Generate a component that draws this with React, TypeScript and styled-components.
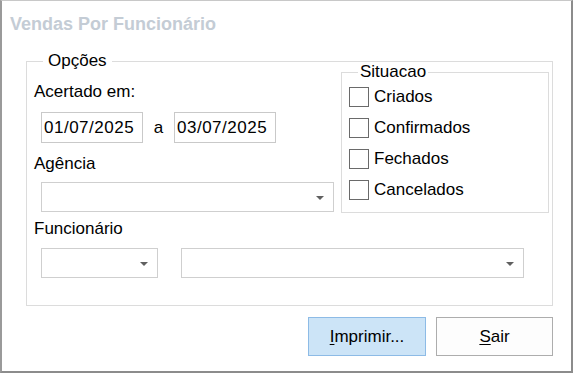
import React from 'react'
import styled, { createGlobalStyle } from 'styled-components'

const GlobalStyle = createGlobalStyle`
  html, body {
    margin: 0;
    padding: 0;
    background: #ffffff;
  }
  body {
    font-family: "Liberation Sans", Arial, sans-serif;
    color: #000;
  }
`

const Window = styled.div`
  width: 573px;
  height: 373px;
  box-sizing: border-box;
  background: #fff;
  border-top: 1px solid #c8c8c8;
  border-left: 2px solid #9a9a9a;
  border-right: 2px solid #8c8c8c;
  border-bottom: 2px solid #8c8c8c;
  padding: 11px 18px 0 24px;
  font-size: 17px;
`

const Title = styled.div`
  font-weight: bold;
  font-size: 18px;
  line-height: 24px;
  color: #c4ccd5;
  margin-left: -16px;
`

const Group = styled.fieldset<{ $w?: number; $h: number }>`
  margin: 0;
  box-sizing: border-box;
  border: 1px solid #dcdcdc;
  min-width: 0;
  width: ${p => (p.$w ? `${p.$w}px` : 'auto')};
  height: ${p => p.$h}px;
  padding: 0 3px 0 7px;
`

const OptionsGroup = styled(Group)`
  margin-top: 14px;
`

const SituacaoGroup = styled(Group)`
  flex: none;
  margin-top: -11px;
  padding: 0 6px 0 7px;
`

const Legend = styled.legend<{ $pad: number }>`
  margin-left: 9px;
  padding: 0 ${p => p.$pad}px;
  line-height: 22px;
`

const TopRow = styled.div`
  display: flex;
  align-items: flex-start;
  gap: 8px;
`

const LeftCol = styled.div`
  width: 299px;
  display: flex;
  flex-direction: column;
`

const Label = styled.div<{ $mt: number }>`
  line-height: 22px;
  margin-top: ${p => p.$mt}px;
`

const DateRow = styled.div`
  display: flex;
  align-items: center;
  margin: 9px 0 0 7px;
`

const DateBox = styled.div`
  width: 102px;
  height: 31px;
  box-sizing: border-box;
  border: 1px solid #c9c9c9;
  padding: 0 2px;
  line-height: 29px;
  letter-spacing: 0.5px;
  white-space: nowrap;
  overflow: hidden;
`

const Sep = styled.span`
  width: 31px;
  text-align: center;
`

const Combo = styled.div<{ $w: number }>`
  width: ${p => p.$w}px;
  height: 30px;
  box-sizing: border-box;
  border: 1px solid #cfcfcf;
  display: flex;
  align-items: center;
  justify-content: flex-end;
  padding-right: 9px;
`

const Arrow = styled.span`
  width: 0;
  height: 0;
  border-left: 4px solid transparent;
  border-right: 4px solid transparent;
  border-top: 4px solid #606060;
  margin-top: 1px;
`

const AgenciaCombo = styled(Combo)`
  margin: 7px 0 0 7px;
`

const ComboRow = styled.div`
  display: flex;
  gap: 23px;
  margin: 8px 0 0 7px;
`

const CheckRow = styled.label`
  display: flex;
  align-items: center;
  height: 31px;
  &:first-of-type {
    margin-top: -2px;
  }
`

const CheckBox = styled.span`
  width: 20px;
  height: 20px;
  box-sizing: border-box;
  border: 1px solid #6a6a6a;
  background: #fff;
  margin-right: 5px;
  flex: none;
`

const ButtonRow = styled.div`
  display: flex;
  justify-content: flex-end;
  gap: 10px;
  margin-top: 11px;
`

const Button = styled.button<{ $focused?: boolean }>`
  font: inherit;
  color: #000;
  height: 39px;
  box-sizing: border-box;
  padding: 0;
  line-height: 37px;
  border: 1px solid ${p => (p.$focused ? '#8dbbe6' : '#adadad')};
  background: ${p => (p.$focused ? '#cce4f7' : '#fdfdfd')};
  width: ${p => (p.$focused ? 118 : 117)}px;
  u {
    text-decoration: underline;
    text-underline-offset: 2px;
  }
`

const situacoes = ['Criados', 'Confirmados', 'Fechados', 'Cancelados']

export default function App() {
  return (
    <>
      <GlobalStyle />
      <Window>
        <Title>Vendas Por Funcionário</Title>
        <OptionsGroup $h={256}>
          <Legend $pad={5}>Opções</Legend>
          <TopRow>
            <LeftCol>
              <Label $mt={9}>Acertado em:</Label>
              <DateRow>
                <DateBox>01/07/2025</DateBox>
                <Sep>a</Sep>
                <DateBox>03/07/2025</DateBox>
              </DateRow>
              <Label $mt={10}>Agência</Label>
              <AgenciaCombo $w={293}>
                <Arrow />
              </AgenciaCombo>
            </LeftCol>
            <SituacaoGroup $w={208} $h={152}>
              <Legend $pad={2}>Situacao</Legend>
              {situacoes.map(s => (
                <CheckRow key={s}>
                  <CheckBox />
                  {s}
                </CheckRow>
              ))}
            </SituacaoGroup>
          </TopRow>
          <Label $mt={5}>Funcionário</Label>
          <ComboRow>
            <Combo $w={117}>
              <Arrow />
            </Combo>
            <Combo $w={343}>
              <Arrow />
            </Combo>
          </ComboRow>
        </OptionsGroup>
        <ButtonRow>
          <Button $focused>
            <u>I</u>mprimir...
          </Button>
          <Button>
            <u>S</u>air
          </Button>
        </ButtonRow>
      </Window>
    </>
  )
}
